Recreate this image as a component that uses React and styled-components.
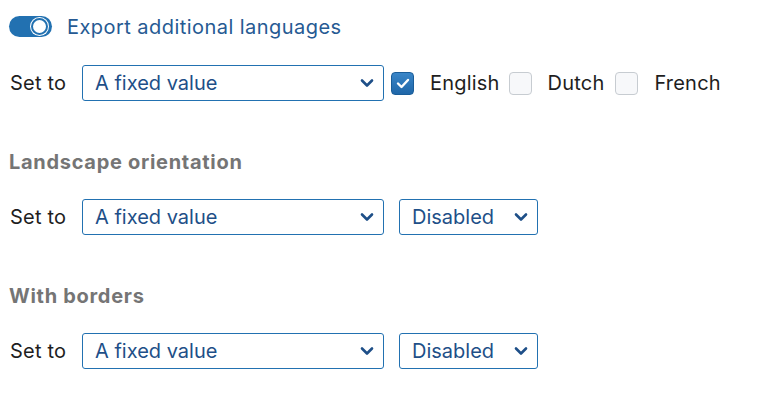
import React from "react";
import styled, { createGlobalStyle } from "styled-components";

const GlobalStyle = createGlobalStyle`
  body {
    margin: 0;
    background: #fff;
    font-family: Inter, "Noto Sans", sans-serif;
  }
`;

const Page = styled.div`
  padding: 16px 9px 0 9px;
  display: flex;
  flex-direction: column;
`;

const ToggleRow = styled.label`
  display: flex;
  align-items: center;
  gap: 15px;
  height: 21px;
`;

const Toggle = styled.span`
  width: 43px;
  height: 21px;
  border-radius: 11px;
  background: #2271b1;
  position: relative;
  flex-shrink: 0;

  &::after {
    content: "";
    position: absolute;
    right: 4px;
    top: 2px;
    width: 13px;
    height: 13px;
    border-radius: 50%;
    background: #fff;
    border: 2px solid #2271b1;
    box-shadow: 0 0 0 1px #fff;
  }
`;

const ToggleLabel = styled.span`
  color: #265a93;
  font-size: 20px;
  letter-spacing: 0.45px;
`;

const Row = styled.div`
  display: flex;
  align-items: center;
  margin-top: ${(p) => p.$top}px;
  height: 36px;
`;

const SetTo = styled.span`
  color: #1e1e1e;
  font-size: 20px;
  width: 72px;
  padding-left: 1px;
  letter-spacing: 0.2px;
`;

const SelectBox = styled.div`
  width: ${(p) => p.$width}px;
  height: 36px;
  box-sizing: border-box;
  border: 1px solid #2271b1;
  border-radius: 3px;
  display: flex;
  align-items: center;
  justify-content: space-between;
  padding: 0 9px 0 12px;
  color: #1e4f88;
  font-size: 20px;
  margin-right: ${(p) => p.$gap || 0}px;
  background: #fff;
`;

const Chevron = () => (
  <svg width="14" height="10" viewBox="0 0 14 10">
    <path
      d="M2 2.5 L7 7.5 L12 2.5"
      fill="none"
      stroke="#1e4f88"
      strokeWidth="2.6"
      strokeLinecap="round"
      strokeLinejoin="round"
    />
  </svg>
);

const Check = styled.span`
  width: 23px;
  height: 23px;
  box-sizing: border-box;
  border-radius: 4px;
  display: flex;
  align-items: center;
  justify-content: center;
  flex-shrink: 0;
  background: ${(p) => (p.$on ? "linear-gradient(#3a86c8, #1f66a8)" : "#f7f8fa")};
  border: 1px solid ${(p) => (p.$on ? "#1a5d99" : "#c7ccd1")};
`;

const CheckText = styled.span`
  color: #1e1e1e;
  font-size: 20px;
  letter-spacing: 0.2px;
  margin: 0 ${(p) => p.$right}px 0 ${(p) => p.$left}px;
`;

const Heading = styled.div`
  color: #757575;
  font-weight: 700;
  font-size: 20px;
  letter-spacing: 0.7px;
  margin-top: ${(p) => p.$top}px;
  height: 24px;
  line-height: 24px;
`;

function Box({ on }) {
  return (
    <Check $on={on}>
      {on && (
        <svg width="14" height="11" viewBox="0 0 14 11">
          <path
            d="M2 5.5 L5.5 9 L12 2"
            fill="none"
            stroke="#fff"
            strokeWidth="2.4"
            strokeLinecap="round"
            strokeLinejoin="round"
          />
        </svg>
      )}
    </Check>
  );
}

function Select({ width, gap, value }) {
  return (
    <SelectBox $width={width} $gap={gap}>
      {value}
      <Chevron />
    </SelectBox>
  );
}

export default function App() {
  return (
    <>
      <GlobalStyle />
      <Page>
        <ToggleRow>
          <Toggle />
          <ToggleLabel>Export additional languages</ToggleLabel>
        </ToggleRow>

        <Row $top={28}>
          <SetTo>Set to</SetTo>
          <Select width={302} gap={7} value="A fixed value" />
          <Box on />
          <CheckText $left={16} $right={9}>English</CheckText>
          <Box />
          <CheckText $left={16} $right={11}>Dutch</CheckText>
          <Box />
          <CheckText $left={16} $right={0}>French</CheckText>
        </Row>

        <Heading $top={49}>Landscape orientation</Heading>
        <Row $top={25}>
          <SetTo>Set to</SetTo>
          <Select width={302} gap={15} value="A fixed value" />
          <Select width={139} value="Disabled" />
        </Row>

        <Heading $top={49}>With borders</Heading>
        <Row $top={25}>
          <SetTo>Set to</SetTo>
          <Select width={302} gap={15} value="A fixed value" />
          <Select width={139} value="Disabled" />
        </Row>
      </Page>
    </>
  );
}
